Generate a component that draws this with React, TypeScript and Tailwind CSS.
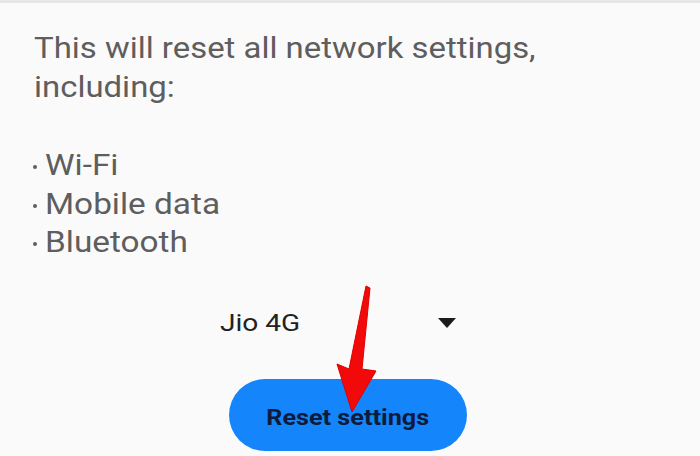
import React from 'react';

const items = ['Wi-Fi', 'Mobile data', 'Bluetooth'];

export default function App() {
  return (
    <div className="relative h-[456px] w-[700px] overflow-hidden border-t-[3px] border-[#e6e6e6] bg-[#fafafa] font-['Roboto',sans-serif]">
      {/* screenshot is stretched sideways, so text gets scale-x */}
      <p className="pl-[34px] pt-[26px] text-[29px] leading-[39px] text-[#5e5e5e]">
        <span className="inline-block origin-left scale-x-[1.135] whitespace-nowrap">
          This will reset all network settings,
          <br />
          including:
        </span>
      </p>

      <ul className="mt-[39px] pl-[33px] text-[29px] leading-[38.5px] text-[#5e5e5e]">
        {items.map((item) => (
          <li key={item} className="flex h-[38.5px] items-center">
            <span className="mr-[8px] h-[4px] w-[4px] translate-y-[2px] rounded-full bg-[#5e5e5e]" />
            <span className="inline-block origin-left scale-x-[1.15]">{item}</span>
          </li>
        ))}
      </ul>

      <div className="mt-[45px] flex h-[32px] w-[456px] items-center justify-between pl-[220px]">
        <span className="inline-block origin-left scale-x-[1.17] text-[24px] leading-[32px] text-[#222222]">
          Jio 4G
        </span>
        <svg width="18" height="10" viewBox="0 0 18 10">
          <path d="M0 0 H18 L9 10 Z" fill="#1b1b1b" />
        </svg>
      </div>

      <div className="mt-[40px] pl-[229px]">
        <button className="flex h-[72px] w-[238px] items-center justify-center rounded-full bg-[#1485fa] text-[22.5px] font-bold text-[#0e1b3a]">
          <span className="inline-block translate-y-[3px] scale-x-[1.12]">Reset settings</span>
        </button>
      </div>

      <svg className="absolute left-0 top-0" width="700" height="456" viewBox="0 0 700 456">
        <path
          d="M366 283 L370 285 L362 366 L376 368 L352 409 L337 361 L349 366 Z"
          fill="#f20a0a"
          stroke="#e00000"
          strokeWidth="1"
          strokeLinejoin="round"
        />
      </svg>
    </div>
  );
}
